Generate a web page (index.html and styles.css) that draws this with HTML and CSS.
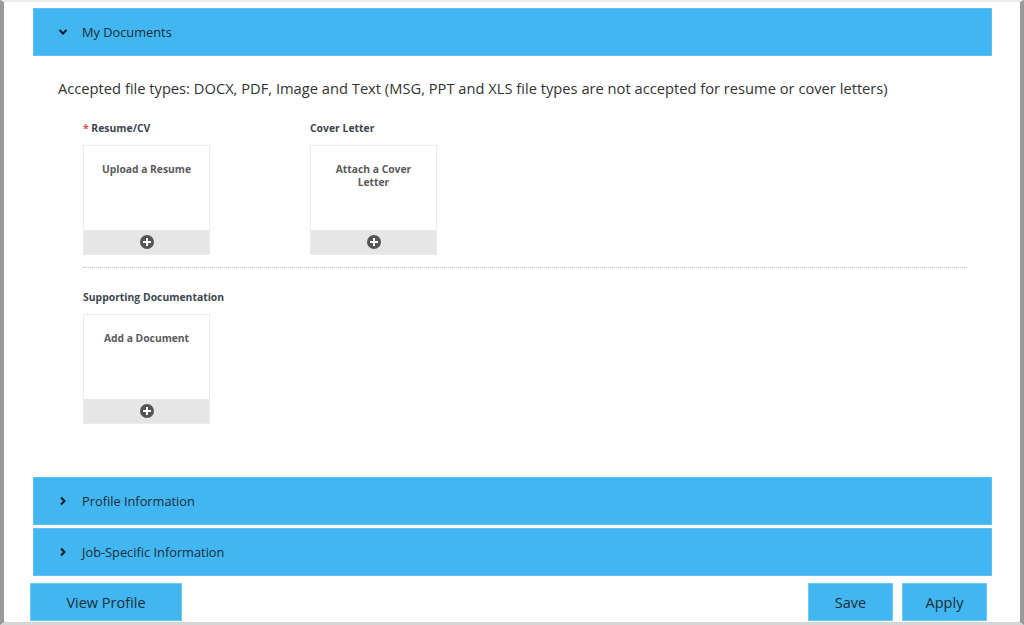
FILE: index.html
```html
<!DOCTYPE html>
<html lang="en">
  <head>
    <meta charset="UTF-8" />
    <title>Application</title>
    <link rel="stylesheet" href="styles.css">
  </head>
  <body>
    <div class="frame">
      <!-- My Documents -->
      <div class="section open">
        <div class="section-head">
          <svg class="chev" viewBox="0 0 10 10" width="10" height="10"><path d="M1.5 3 L5 6.5 L8.5 3" fill="none" stroke="#1a1a1a" stroke-width="2"/></svg>
          <span>My Documents</span>
        </div>
        <div class="section-body">
          <p class="accepted">Accepted file types: DOCX, PDF, Image and Text (MSG, PPT and XLS file types are not accepted for resume or cover letters)</p>

          <div class="doc-row">
            <div class="doc">
              <div class="doc-label"><span class="req">*</span> Resume/CV</div>
              <div class="tile">
                <div class="tile-text">Upload a Resume</div>
                <div class="tile-foot"><span class="plus"></span></div>
              </div>
            </div>
            <div class="doc">
              <div class="doc-label">Cover Letter</div>
              <div class="tile">
                <div class="tile-text">Attach a Cover Letter</div>
                <div class="tile-foot"><span class="plus"></span></div>
              </div>
            </div>
          </div>

          <hr class="divider">

          <div class="doc-row">
            <div class="doc">
              <div class="doc-label">Supporting Documentation</div>
              <div class="tile">
                <div class="tile-text">Add a Document</div>
                <div class="tile-foot"><span class="plus"></span></div>
              </div>
            </div>
          </div>
        </div>
      </div>

      <!-- Collapsed sections -->
      <div class="section">
        <div class="section-head">
          <svg class="chev" viewBox="0 0 10 10" width="10" height="10"><path d="M3 1.5 L6.5 5 L3 8.5" fill="none" stroke="#1a1a1a" stroke-width="2"/></svg>
          <span>Profile Information</span>
        </div>
      </div>
      <div class="section">
        <div class="section-head">
          <svg class="chev" viewBox="0 0 10 10" width="10" height="10"><path d="M3 1.5 L6.5 5 L3 8.5" fill="none" stroke="#1a1a1a" stroke-width="2"/></svg>
          <span>Job-Specific Information</span>
        </div>
      </div>

      <div class="actions">
        <button class="btn wide">View Profile</button>
        <div class="right">
          <button class="btn">Save</button>
          <button class="btn">Apply</button>
        </div>
      </div>
    </div>
  </body>
</html>
```

FILE: styles.css
```css
:root {
  --blue: #41b6f0;
  --edge: #9a9a9a;
  --text: #333333;
  --tile-text: #5a5a5a;
}

* {
  margin: 0;
  padding: 0;
  box-sizing: border-box;
}

body {
  background: #fff;
  font-family: "Open Sans", "Noto Sans", sans-serif;
  color: var(--text);
}

.frame {
  height: 625px;
  border-left: 4px solid var(--edge);
  border-right: 4px solid var(--edge);
  border-top: 2px solid #ececec;
  border-bottom: 3px solid #d6d6d6;
  padding: 6px 28px 0 29px;
  overflow: hidden;
}

.section {
  margin-bottom: 3px;
}

.section-head {
  background: var(--blue);
  border: 1px solid #5cc2f3;
  height: 48px;
  display: flex;
  align-items: center;
  padding-left: 24px;
  font-size: 12.8px;
  color: #1d2d3a;
}

.chev {
  margin-right: 14px;
}

.section-body {
  padding: 22px 0 50px 25px;
}

.accepted {
  font-size: 14.7px;
  color: #333;
  margin-bottom: 23px;
}

.doc-row {
  display: flex;
  gap: 100px;
  padding-left: 25px;
}

.doc-label {
  font-weight: bold;
  font-size: 10.4px;
  color: #3c4650;
  margin-bottom: 10px;
}

.req {
  color: #e8473b;
}

.tile {
  width: 127px;
  height: 110px;
  border: 1px solid #ececec;
  display: flex;
  flex-direction: column;
}

.tile-text {
  flex: 1;
  font-weight: bold;
  font-size: 10.3px;
  color: var(--tile-text);
  text-align: center;
  padding: 17px 16px 0;
  line-height: 13px;
}

.tile-foot {
  height: 24px;
  background: #e6e6e6;
  display: flex;
  align-items: center;
  justify-content: center;
}

.plus {
  width: 14px;
  height: 14px;
  border-radius: 50%;
  background: #555;
  position: relative;
}

.plus::before,
.plus::after {
  content: "";
  position: absolute;
  background: #fff;
  left: 50%;
  top: 50%;
  transform: translate(-50%, -50%);
}

.plus::before {
  width: 8px;
  height: 2px;
}

.plus::after {
  width: 2px;
  height: 8px;
}

.divider {
  border: none;
  border-top: 1px dotted #bdbdbd;
  margin: 12px 0 22px 25px;
  width: 884px;
}

.actions {
  display: flex;
  justify-content: space-between;
  margin: 7px 0 0 -3px;
}

.right {
  display: flex;
  gap: 9px;
  margin-right: 5px;
}

.btn {
  background: var(--blue);
  border: 1px solid #6ccaf5;
  height: 38px;
  width: 85px;
  font-family: "Open Sans", "Noto Sans", sans-serif;
  font-size: 14.5px;
  color: #1d2d3a;
}

.btn.wide {
  width: 152px;
}
```
